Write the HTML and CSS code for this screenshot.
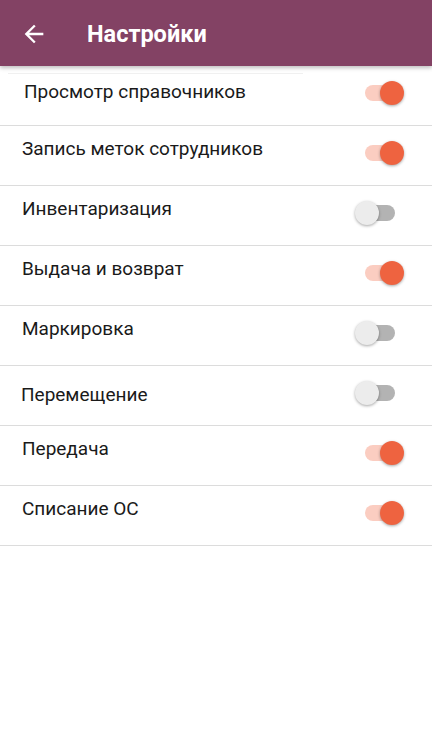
FILE: index.html
```html
<!DOCTYPE html>
<html lang="ru">
<head>
<meta charset="utf-8">
<title>Настройки</title>
<link rel="stylesheet" href="styles.css">
</head>
<body>
<header class="appbar">
  <svg class="back" width="28" height="28" viewBox="0 0 24 24"><path d="M20 11H7.83l5.59-5.59L12 4l-8 8 8 8 1.41-1.41L7.83 13H20v-2z" fill="#fff"/></svg>
  <h1 class="title">Настройки</h1>
</header>
<main class="list">
  <div class="row row-first"><span class="label">Просмотр справочников</span><span class="switch on"><span class="track"></span><span class="thumb"></span></span></div>
  <div class="row"><span class="label">Запись меток сотрудников</span><span class="switch on"><span class="track"></span><span class="thumb"></span></span></div>
  <div class="row"><span class="label">Инвентаризация</span><span class="switch"><span class="track"></span><span class="thumb"></span></span></div>
  <div class="row"><span class="label">Выдача и возврат</span><span class="switch on"><span class="track"></span><span class="thumb"></span></span></div>
  <div class="row"><span class="label">Маркировка</span><span class="switch"><span class="track"></span><span class="thumb"></span></span></div>
  <div class="row row-center"><span class="label">Перемещение</span><span class="switch"><span class="track"></span><span class="thumb"></span></span></div>
  <div class="row"><span class="label">Передача</span><span class="switch on"><span class="track"></span><span class="thumb"></span></span></div>
  <div class="row"><span class="label">Списание ОС</span><span class="switch on"><span class="track"></span><span class="thumb"></span></span></div>
</main>
</body>
</html>
```
FILE: styles.css
```css
html, body {
  margin: 0;
  padding: 0;
  background: #fff;
  font-family: Roboto, "Noto Sans", sans-serif;
}
.appbar {
  height: 66px;
  background: #834264;
  display: flex;
  align-items: center;
  padding-left: 20px;
  box-shadow: 0 2px 4px rgba(0,0,0,0.25);
  position: relative;
  z-index: 1;
}
.back {
  width: 28px;
  height: 28px;
  margin-top: 1px;
}
.title {
  margin: 1px 0 0 39px;
  color: #fff;
  font-size: 23.5px;
  font-weight: 700;
  letter-spacing: 0;
}
.list {
  display: flex;
  flex-direction: column;
}
.row {
  height: 59px;
  border-bottom: 1px solid #dcdcdc;
  display: flex;
  align-items: flex-start;
  justify-content: space-between;
  padding: 0 28px 0 22px;
  position: relative;
}
.label {
  font-size: 19px;
  color: #1a1a1a;
  margin-top: 12px;
  line-height: 22px;
}
.row-first .label {
  margin-top: 15px;
  margin-left: 2px;
}
.row-first::before {
  content: "";
  position: absolute;
  left: 8px;
  width: 295px;
  top: 7px;
  height: 1px;
  background: #f0f0f0;
}
.row-center .label {
  margin-top: 18px;
  margin-left: -1px;
}
.switch {
  position: relative;
  width: 49px;
  height: 24px;
  margin-top: 15px;
}
.track {
  position: absolute;
  left: 10px;
  right: 9px;
  top: 4px;
  height: 16px;
  border-radius: 8px;
  background: #b3b3b3;
}
.thumb {
  position: absolute;
  left: 0;
  top: 0;
  width: 24px;
  height: 24px;
  border-radius: 50%;
  background: #ececec;
  box-shadow: 0 1px 3px rgba(0,0,0,0.35);
}
.switch.on .track { background: #fbcdc1; }
.switch.on .thumb {
  left: auto;
  right: 0;
  background: #ee6340;
}
```
